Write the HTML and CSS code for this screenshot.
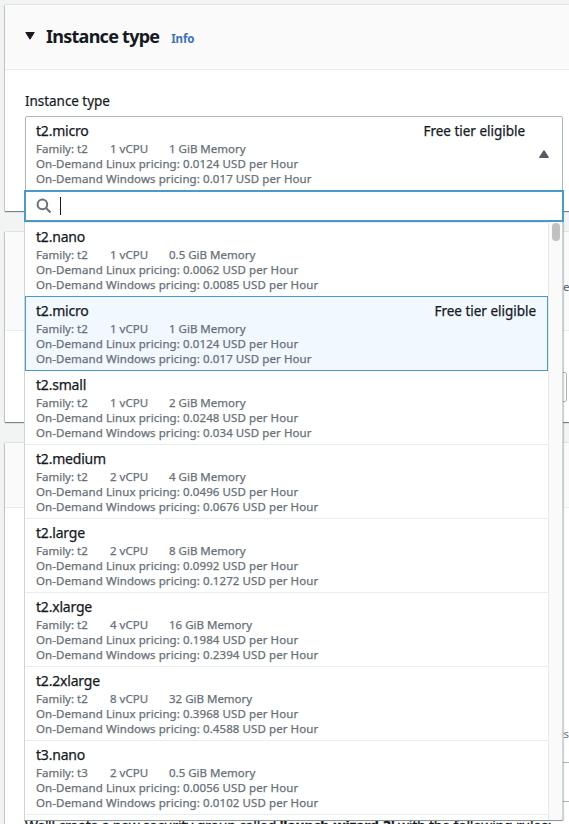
FILE: index.html
```html
<!DOCTYPE html>
<html lang="en">
<head>
<meta charset="utf-8">
<title>Launch an instance</title>
<link rel="stylesheet" href="styles.css">
</head>
<body>
<main class="page">
  <section class="card card-type">
    <header class="card-header">
      <svg class="caret" viewBox="0 0 10 8"><path d="M.8.5h8.4L5 7.2z"/></svg>
      <h2>Instance type</h2>
      <a class="info">Info</a>
    </header>
    <div class="card-body">
      <div class="label">Instance type</div>
      <div class="select">
        <div class="trigger">
          <div class="row"><span class="name">t2.micro</span><span class="free">Free tier eligible</span></div>
          <div class="meta"><span class="family">Family: t2</span><span class="cpu">1 vCPU</span><span>1 GiB Memory</span></div>
          <div class="linux">On-Demand Linux pricing: 0.0124 USD per Hour</div>
          <div class="windows">On-Demand Windows pricing: 0.017 USD per Hour</div>
          <svg class="arrow" viewBox="0 0 10 8"><path d="M.8 7.3h8.4L5 1z"/></svg>
        </div>
        <div class="dropdown">
          <div class="search">
            <svg viewBox="0 0 16 16"><circle cx="6.4" cy="6.4" r="4.8"/><path d="M10 10l4.5 4.5"/></svg>
            <span class="cursor"></span>
          </div>
          <div class="list">
            <div class="options" id="options"></div>
            <div class="scrollbar"><div class="thumb"></div></div>
          </div>
        </div>
      </div>
    </div>
  </section>
  <section class="card card-key">
    <header class="card-header"><span class="hint">se</span></header>
    <div class="card-body"><div class="key-field"></div></div>
  </section>
  <section class="card card-network">
    <header class="card-header"></header>
    <div class="card-body">
      <div class="hint">y s</div>
      <div class="network-field"></div>
      <p>We'll create a new security group called <b>'launch-wizard-3'</b> with the following rules:</p>
    </div>
  </section>
</main>
<script src="options.js"></script>
</body>
</html>
```
FILE: styles.css
```css
* { box-sizing: border-box; }
body {
  margin: 0;
  background: #f2f3f3;
  color: #16191f;
  font-family: "Noto Sans", "Open Sans", sans-serif;
  font-size: 14px;
}
.page {
  height: 824px;
  padding: 5px 0 0 5px;
  overflow: hidden;
  display: flex;
  flex-direction: column;
  gap: 21px;
}
.card {
  flex: none;
  background: #fff;
  box-shadow: 0 1px 1px 0 rgba(0, 28, 36, .5), -1px 0 1px rgba(0, 28, 36, .12), 0 -1px 0 #e6e9e9;
}
.card-type { height: 206px; }
.card-key { height: 190px; }
.card-network { height: 420px; }
.card-header {
  height: 65px;
  background: #fafafa;
  border-bottom: 1px solid #eaeded;
  padding-left: 20px;
  display: flex;
  align-items: center;
}
.caret { width: 10px; height: 8px; margin-top: -2px; fill: #16191f; stroke: #16191f; stroke-linejoin: round; }
h2 {
  margin: -2px 0 0 11px;
  font-size: 18px;
  line-height: 22px;
  font-weight: 700;
  letter-spacing: -.74px;
}
.info { margin: 3px 0 0 12px; color: #3b70bf; font-size: 11.5px; font-weight: 700; line-height: 16px; letter-spacing: -.2px; }
.card-body { padding: 21px 6px 0 20px; }
.label { height: 25px; line-height: 20px; font-size: 13.5px; letter-spacing: -.05px; -webkit-text-stroke: .2px; }
.select { position: relative; }
.trigger {
  position: relative;
  height: 76px;
  padding: 5px 10px;
  border: 1px solid #aab7b8;
  border-radius: 2px;
}
.trigger, .option {
  color: #687078;
  font-size: 11.5px;
  line-height: 15px;
  white-space: nowrap;
  -webkit-text-stroke: .25px;
}
.trigger .row { padding-right: 27px; }
.arrow { position: absolute; right: 13px; top: 33px; width: 10px; height: 8px; fill: #545b64; stroke: #545b64; stroke-width: 1.4px; stroke-linejoin: round; }
.dropdown {
  position: absolute;
  z-index: 2;
  top: 74px;
  left: -1px;
  width: 540px;
}
.search {
  height: 32px;
  border: 2px solid #4a9bc9;
  background: #fff;
  display: flex;
  align-items: center;
  padding-left: 10px;
}
.search svg { width: 16px; height: 16px; fill: none; stroke: #687078; stroke-width: 2; }
.cursor { width: 1px; height: 18px; margin-left: 8px; background: #16191f; }
.list {
  height: 599px;
  display: flex;
  overflow: hidden;
  background: #fff;
  border: 1px solid #cfd4d5;
  border-top: 0;
  border-bottom-color: #8b9899;
  margin-right: 1px;
  box-shadow: 1px 0 1px rgba(0, 28, 36, .2);
}
.options { flex: 1; }
.option {
  height: 75px;
  margin-bottom: -1px;
  padding: 5px 11px 4px 10px;
  border: 1px solid transparent;
  border-top-color: #eaeded;
}
.option.selected { position: relative; background: #f1f8ff; border-color: #4a9bc9; }
.row { display: flex; justify-content: space-between; height: 19px; line-height: 18px; color: #16191f; font-size: 14px; }
.name { letter-spacing: -.2px; }
.free { font-size: 13.5px; letter-spacing: -.02px; }
.linux, .windows { letter-spacing: .085px; }
.meta { display: flex; }
.family { width: 74px; }
.cpu { width: 59px; }
.scrollbar { width: 14px; background: #fafafa; border-left: 1px solid #e8e8e8; padding: 1px 3px; }
.thumb { width: 8px; height: 18px; border-radius: 4px; background: #c1c1c1; }
.card-key .card-header { height: 99px; padding: 12px 0 0; justify-content: flex-end; }
.hint { color: #687078; font-size: 11.5px; line-height: 16px; text-align: right; }
.card-key .hint { color: #545b64; font-size: 11px; letter-spacing: -.4px; }
.card-key .card-body { padding: 41px 2px 0 20px; }
.key-field { height: 30px; border: 1px solid #aab7b8; border-radius: 2px; }
.card-network .card-body { padding: 218px 0 0 20px; }
.network-field { height: 40px; margin-top: 20px; border: solid #aab7b8; border-width: 1px 0; }
p { margin: 14px 0 0; font-size: 14px; line-height: 20px; white-space: nowrap; letter-spacing: -.18px; -webkit-text-stroke: .3px; }
```
FILE: options.js
```js
const types = [
  ["t2.nano", 1, "0.5", "0.0062", "0.0085"],
  ["t2.micro", 1, "1", "0.0124", "0.017", true],
  ["t2.small", 1, "2", "0.0248", "0.034"],
  ["t2.medium", 2, "4", "0.0496", "0.0676"],
  ["t2.large", 2, "8", "0.0992", "0.1272"],
  ["t2.xlarge", 4, "16", "0.1984", "0.2394"],
  ["t2.2xlarge", 8, "32", "0.3968", "0.4588"],
  ["t3.nano", 2, "0.5", "0.0056", "0.0102"]
];
document.getElementById("options").innerHTML = types.map(([name, cpu, mem, linux, windows, free]) => `
  <div class="option${free ? " selected" : ""}">
    <div class="row"><span class="name">${name}</span>${free ? '<span class="free">Free tier eligible</span>' : ""}</div>
    <div class="meta"><span class="family">Family: ${name.slice(0, 2)}</span><span class="cpu">${cpu} vCPU</span><span>${mem} GiB Memory</span></div>
    <div class="linux">On-Demand Linux pricing: ${linux} USD per Hour</div>
    <div class="windows">On-Demand Windows pricing: ${windows} USD per Hour</div>
  </div>`).join("") + '<div class="option"></div>';
```
